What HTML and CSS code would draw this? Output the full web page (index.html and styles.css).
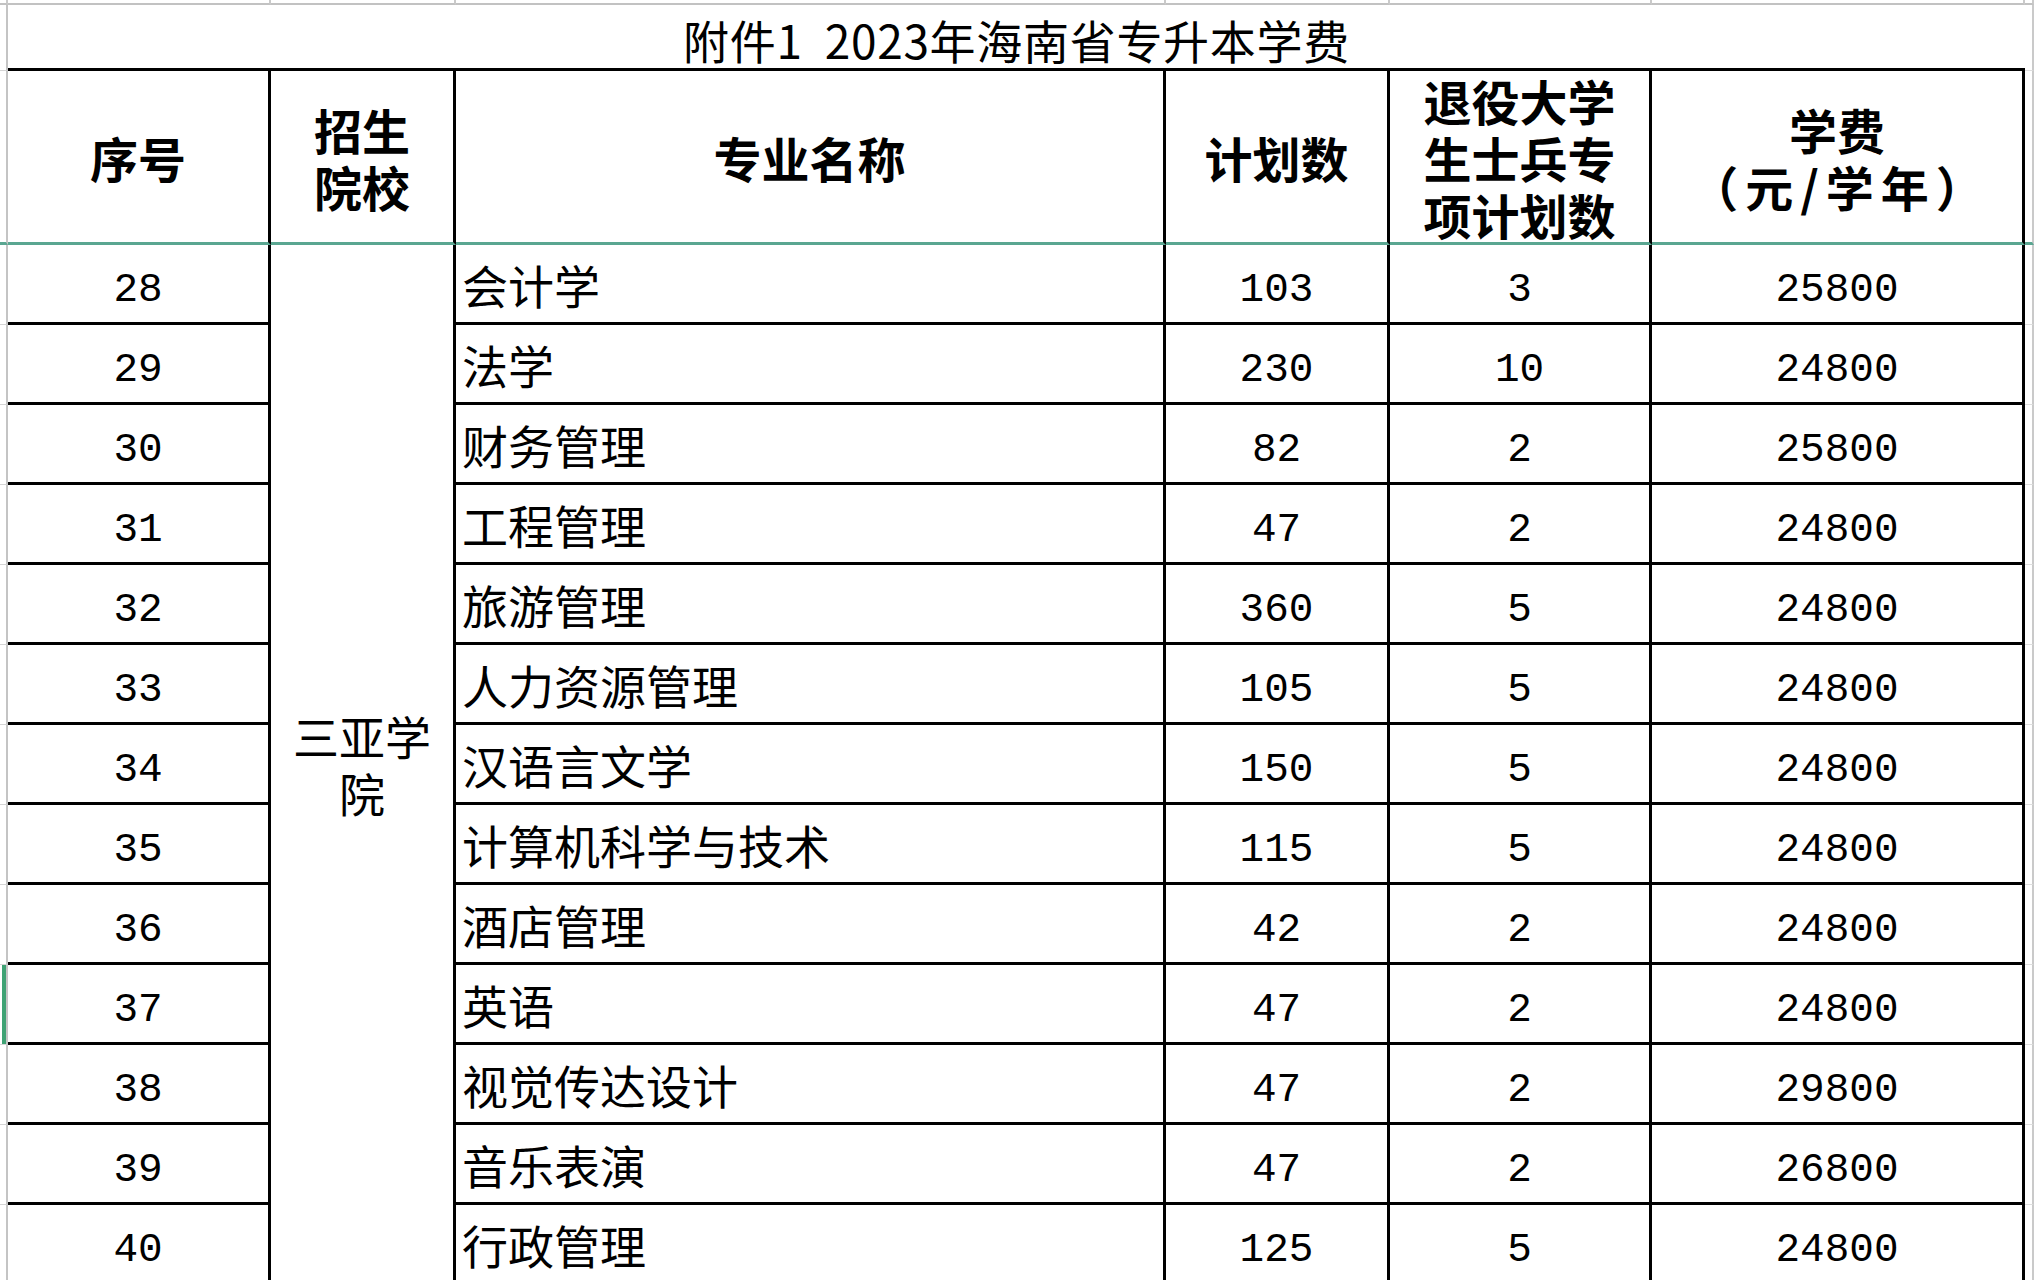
FILE: index.html
```html
<!DOCTYPE html>
<html lang="zh-CN">
<head>
<meta charset="utf-8">
<title>附件1 2023年海南省专升本学费</title>
<link rel="stylesheet" href="styles.css">
</head>
<body>
<div class="sheet">
  <!-- hidden row above: only its grid lines show -->
  <div class="top"></div><div class="top"></div><div class="top"></div><div class="top"></div>
  <div class="top"></div><div class="top"></div><div class="top"></div><div class="top"></div>

  <!-- title row -->
  <div class="rh"></div>
  <div class="title">附件1&nbsp;&nbsp;2023年海南省专升本学费</div>
  <div class="gut"></div>

  <!-- header row -->
  <div class="rh head"></div>
  <div class="th"><span class="ln">序号</span></div>
  <div class="th"><span class="ln">招生</span><span class="ln">院校</span></div>
  <div class="th"><span class="ln">专业名称</span></div>
  <div class="th"><span class="ln">计划数</span></div>
  <div class="th"><span class="ln">退役大学</span><span class="ln">生士兵专</span><span class="ln">项计划数</span></div>
  <div class="th"><span class="ln">学费</span><span class="ln wide">（元/学年）</span></div>
  <div class="gut head"></div>

  <!-- 28 -->
  <div class="rh"></div>
  <div class="td num">28</div>
  <div class="td school"><span class="ln">三亚学</span><span class="ln">院</span></div>
  <div class="td name">会计学</div>
  <div class="td num">103</div>
  <div class="td num">3</div>
  <div class="td num">25800</div>
  <div class="gut"></div>

  <div class="rh"></div>
  <div class="td num">29</div>
  <div class="td name">法学</div>
  <div class="td num">230</div>
  <div class="td num">10</div>
  <div class="td num">24800</div>
  <div class="gut"></div>

  <div class="rh"></div>
  <div class="td num">30</div>
  <div class="td name">财务管理</div>
  <div class="td num">82</div>
  <div class="td num">2</div>
  <div class="td num">25800</div>
  <div class="gut"></div>

  <div class="rh"></div>
  <div class="td num">31</div>
  <div class="td name">工程管理</div>
  <div class="td num">47</div>
  <div class="td num">2</div>
  <div class="td num">24800</div>
  <div class="gut"></div>

  <div class="rh"></div>
  <div class="td num">32</div>
  <div class="td name">旅游管理</div>
  <div class="td num">360</div>
  <div class="td num">5</div>
  <div class="td num">24800</div>
  <div class="gut"></div>

  <div class="rh"></div>
  <div class="td num">33</div>
  <div class="td name">人力资源管理</div>
  <div class="td num">105</div>
  <div class="td num">5</div>
  <div class="td num">24800</div>
  <div class="gut"></div>

  <div class="rh"></div>
  <div class="td num">34</div>
  <div class="td name">汉语言文学</div>
  <div class="td num">150</div>
  <div class="td num">5</div>
  <div class="td num">24800</div>
  <div class="gut"></div>

  <div class="rh"></div>
  <div class="td num">35</div>
  <div class="td name">计算机科学与技术</div>
  <div class="td num">115</div>
  <div class="td num">5</div>
  <div class="td num">24800</div>
  <div class="gut"></div>

  <div class="rh"></div>
  <div class="td num">36</div>
  <div class="td name">酒店管理</div>
  <div class="td num">42</div>
  <div class="td num">2</div>
  <div class="td num">24800</div>
  <div class="gut"></div>

  <div class="rh sel"></div>
  <div class="td num">37</div>
  <div class="td name">英语</div>
  <div class="td num">47</div>
  <div class="td num">2</div>
  <div class="td num">24800</div>
  <div class="gut"></div>

  <div class="rh"></div>
  <div class="td num">38</div>
  <div class="td name">视觉传达设计</div>
  <div class="td num">47</div>
  <div class="td num">2</div>
  <div class="td num">29800</div>
  <div class="gut"></div>

  <div class="rh"></div>
  <div class="td num">39</div>
  <div class="td name">音乐表演</div>
  <div class="td num">47</div>
  <div class="td num">2</div>
  <div class="td num">26800</div>
  <div class="gut"></div>

  <div class="rh"></div>
  <div class="td num">40</div>
  <div class="td name">行政管理</div>
  <div class="td num">125</div>
  <div class="td num">5</div>
  <div class="td num">24800</div>
  <div class="gut"></div>
</div>
</body>
</html>
```

FILE: styles.css
```css
html, body {
  margin: 0;
  padding: 0;
  background: #ffffff;
  overflow: hidden;
}

.sheet {
  display: grid;
  grid-template-columns: 8px 263px 185px 710px 224px 262px 373px 9px;
  grid-template-rows: 5px 66px 174px repeat(13, 80px);
  width: 2034px;
  color: #000;
  font-family: "Noto Sans CJK SC", "Noto Sans", sans-serif;
}

.sheet > div {
  box-sizing: border-box;
  min-width: 0;
}

/* hidden row above the title: grey grid lines only */
.top {
  border-bottom: 2px solid #c2c2c2;
  border-right: 2px solid #cacaca;
}

/* row header strip at the far left */
.rh {
  border-right: 2px solid #c4c4c4;
  border-bottom: 1px solid #d4d4d4;
}
.rh.sel {
  background: linear-gradient(to right, transparent 2px, #3fa274 2px, #3fa274 7px, transparent 7px);
}

/* gutter to the right of the table */
.gut {
  border-right: 2px solid #cacaca;
  border-bottom: 1px solid #dedede;
}

/* freeze line under the header */
.head {
  border-bottom: 3px solid #5aa691;
}

.title {
  grid-column: 2 / 8;
  display: flex;
  align-items: center;
  justify-content: center;
  padding-top: 4px;
  font-size: 46px;
  line-height: 1;
  letter-spacing: 0.7px;
  white-space: pre;
  border-bottom: 3px solid #000;
}

.th {
  display: flex;
  flex-direction: column;
  align-items: center;
  justify-content: center;
  text-align: center;
  padding-top: 2px;
  font-size: 48px;
  font-weight: 700;
  line-height: 57px;
  border-right: 3px solid #000;
  border-bottom: 3px solid #5aa691;
}

.ln {
  display: block;
  height: 57px;
  white-space: nowrap;
}

.ln.wide {
  letter-spacing: 7px;
  padding-left: 7px;
}

.td {
  display: flex;
  align-items: center;
  border-right: 3px solid #000;
  border-bottom: 3px solid #000;
  line-height: 1;
}

.num {
  justify-content: center;
  padding-top: 14px;
  font-family: "Liberation Mono", monospace;
  font-size: 41px;
}

.name {
  justify-content: flex-start;
  padding-left: 6px;
  padding-top: 1px;
  font-size: 46px;
}

.school {
  grid-row: span 13;
  flex-direction: column;
  justify-content: center;
  text-align: center;
  padding: 0 2px;
  font-size: 46px;
  line-height: 57px;
}
```
